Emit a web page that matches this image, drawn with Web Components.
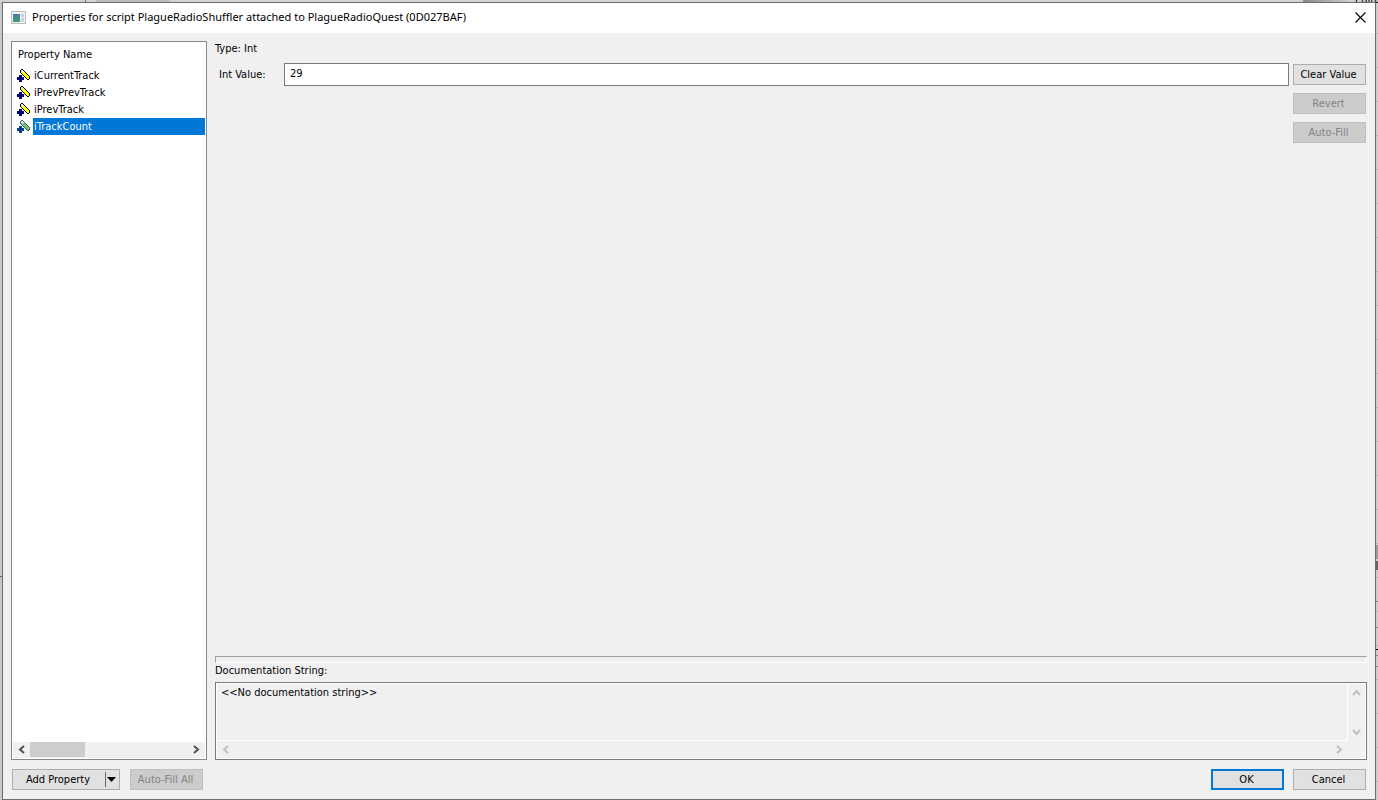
<!DOCTYPE html>
<html lang="en">
<head>
<meta charset="utf-8">
<title>Script Properties</title>
<style>
    html, body { height: 100%; }
    body {
        margin: 0;
        box-sizing: border-box;
        padding: 2px 2px 0;
        font: 11px/16px "DejaVu Sans Condensed", "DejaVu Sans", sans-serif;
        color: #000;
        background: #c8c8c8;
        overflow: hidden;
    }
</style>
</head>
<body>
<desktop-backdrop></desktop-backdrop>
<dialog-window caption="Properties for script PlagueRadioShuffler attached to PlagueRadioQuest (0D027BAF)">
    <property-list slot="list">
        <property-item>iCurrentTrack</property-item>
        <property-item>iPrevPrevTrack</property-item>
        <property-item>iPrevTrack</property-item>
        <property-item selected>iTrackCount</property-item>
    </property-list>
    <value-editor type="Int" value="29"></value-editor>
    <documentation-box>&lt;&lt;No documentation string&gt;&gt;</documentation-box>
    <split-button slot="footer">Add Property</split-button>
    <win-button slot="footer" disabled>Auto-Fill All</win-button>
    <win-button slot="actions" default>OK</win-button>
    <win-button slot="actions">Cancel</win-button>
</dialog-window>

<script>
const arrowPaths = {
    left: 'M7 1L3 4.500L7 8',
    right: 'M2 1L6 4.500L2 8',
    up: 'M1 7L4.500 3L8 7',
    down: 'M1 2L4.500 6L8 2'
};

function arrow(dir) {
    return `<svg width="9" height="9" viewBox="0 0 9 9"><path d="${arrowPaths[dir]}" fill="none" stroke="currentColor" stroke-width="2"/></svg>`;
}

// What can be seen of the windows behind the dialog
class DesktopBackdrop extends HTMLElement {
    connectedCallback() {
        this.attachShadow({ mode: 'open' }).innerHTML = `
            <style>
                :host { position: fixed; inset: 0; z-index: -1; overflow: hidden; background: #c8c8c8; }
                .top { position: absolute; top: 0; left: 0; right: 0; height: 2px; background: #d2d2d2; }
                .side { position: absolute; top: 0; right: 0; bottom: 0; width: 2px; background:
                    linear-gradient(#999, #999) 0 545px / 2px 14px no-repeat,
                    linear-gradient(#666, #666) 0 561px / 2px 9px no-repeat,
                    linear-gradient(#000, #000) 0 649px / 2px 1px no-repeat,
                    linear-gradient(#888, #888) 0 601px / 2px 1px no-repeat,
                    linear-gradient(#888, #888) 0 627px / 2px 1px no-repeat,
                    linear-gradient(#888, #888) 0 655px / 2px 1px no-repeat,
                    linear-gradient(#888, #888) 0 666px / 2px 1px no-repeat,
                    repeating-linear-gradient(#ccc 0 33px, #b4b4b4 33px 34px); }
                .rule { position: absolute; left: 0; top: 576px; width: 2px; height: 1px; background: #666; }
                .tab {
                    position: absolute;
                    bottom: calc(100% - 2px);
                    left: 96px;
                    width: 73px;
                    background: #bdbdbd;
                    text-align: center;
                    line-height: 12px;
                }
                .cell { position: absolute; bottom: calc(100% - 8px); left: calc(100% - 23px); }
                .edge { position: absolute; top: 0; left: 85px; width: 1px; height: 2px; background: #777; }
                .shade { position: absolute; top: 0; right: 30px; width: 45px; height: 2px; background: linear-gradient(90deg, #888, #ccc); }
            </style>
            <div class="top"></div><div class="edge"></div><div class="tab">Remove</div>
            <div class="shade"></div><div class="side"></div><div class="rule"></div>
            <div class="cell">Editor</div>
        `;
    }
}

class DialogWindow extends HTMLElement {
    connectedCallback() {
        this.attachShadow({ mode: 'open' }).innerHTML = `
            <style>
                :host {
                    display: flex;
                    flex-direction: column;
                    box-sizing: border-box;
                    height: 100%;
                    border: 1px solid #6d6d6d;
                    background: #f0f0f0;
                }
                header {
                    display: flex;
                    align-items: center;
                    gap: 6px;
                    box-sizing: border-box;
                    height: 30px;
                    padding: 0 8px 2px;
                    background: #fff;
                }
                h1 { flex: 1; margin: 0; font: 11px/16px "Noto Sans", sans-serif; white-space: nowrap; }
                .close { display: flex; border: 0; padding: 1px; background: none; }
                .main {
                    flex: 1;
                    min-height: 0;
                    display: grid;
                    grid-template-columns: 196px 1fr;
                    gap: 8px;
                    padding: 8px 8px 0;
                }
                .panel { display: flex; flex-direction: column; min-width: 0; }
                footer { display: flex; justify-content: space-between; padding: 9px; }
                footer div { display: flex; gap: 9px; }
                footer .left { gap: 10px; }
            </style>
            <header>
                <svg width="15" height="13" viewBox="0 0 15 13" shape-rendering="crispEdges">
                    <defs><linearGradient id="g" x2="0" y2="1"><stop stop-color="#4c7cb0"/><stop offset="1" stop-color="#3f9a70"/></linearGradient></defs>
                    <path d="M0 0h15v13H0z" fill="#b9bcc0"/>
                    <path d="M1 1h13v11H1z" fill="#f0f1f2"/>
                    <path d="M2 3h7v8H2z" fill="url(#g)"/>
                    <path d="M10 3h3v3h-3z" fill="#c3d2dc"/>
                    <path d="M10 7h3v4h-3z" fill="#cdd3da"/>
                </svg>
                <h1></h1>
                <button class="close" aria-label="Close">
                    <svg width="11" height="11" viewBox="0 0 11 11"><path d="M0.500 0.500l10 10M10.500 0.500l-10 10" stroke="#000" stroke-width="1.100"/></svg>
                </button>
            </header>
            <div class="main">
                <slot name="list"></slot>
                <div class="panel"><slot></slot></div>
            </div>
            <footer>
                <div class="left"><slot name="footer"></slot></div>
                <div><slot name="actions"></slot></div>
            </footer>
        `;
        this.shadowRoot.querySelector('h1').textContent = this.getAttribute('caption');
    }
}

class PropertyList extends HTMLElement {
    connectedCallback() {
        this.attachShadow({ mode: 'open' }).innerHTML = `
            <style>
                :host {
                    display: flex;
                    flex-direction: column;
                    min-height: 0;
                    border: 1px solid #828790;
                    padding: 1px;
                    background: #fff;
                }
                .head { padding: 4px 5px; }
                .items { flex: 1; }
                .bar { display: flex; align-items: center; height: 16px; background: #f0f0f0; }
                .bar button { display: flex; border: 0; padding: 3px 4px 4px; background: none; color: #505050; }
                .track { flex: 1; align-self: stretch; display: flex; }
                .thumb { width: 55px; height: 15px; background: #cdcdcd; }
            </style>
            <div class="head">Property Name</div>
            <div class="items" role="listbox" aria-label="Property Name"><slot></slot></div>
            <div class="bar">
                <button aria-label="Scroll left">${arrow('left')}</button>
                <div class="track"><div class="thumb"></div></div>
                <button aria-label="Scroll right">${arrow('right')}</button>
            </div>
        `;
        this.addEventListener('click', e => {
            const item = e.target.closest('property-item');
            if (!item) return;
            this.querySelectorAll('property-item').forEach(p => p.toggleAttribute('selected', p === item));
        });
    }
}

class PropertyItem extends HTMLElement {
    connectedCallback() {
        this.setAttribute('role', 'option');
        this.attachShadow({ mode: 'open' }).innerHTML = `
            <style>
                :host {
                    display: flex;
                    align-items: center;
                    gap: 3px;
                    height: 17px;
                    padding-left: 4px;
                    --plus: #000080;
                    --wand: #ffff00;
                    --edge: #000;
                }
                :host([selected]) { --plus: #003c94; --wand: #7fbc6b; --edge: #2a6a8c; }
                .name { flex: 1; padding: 1px 0 0 1px; }
                :host([selected]) .name { background: #0078d7; color: #fff; }
            </style>
            <svg width="13" height="13" viewBox="0 0 13 13" shape-rendering="crispEdges">
                <path d="M4 0h2v1h1v1h1v1h1v1h1v1h1v1h1v1h1v3h-1v1h-2v-1H9V9H8V8H7V7H6V6H5V5H4V4H3V1h1z" fill="var(--edge)"/>
                <path d="M4 1h2v1h1v1h1v1h1v1h1v1h1v1h1v3h-2V9H9V8H8V7H7V6H6V5H5V4H4z" fill="var(--wand)"/>
                <path d="M4 1h2v1h1v1H6v1H5V3H4z" fill="#e8e8d0"/>
                <path d="M2 6h3v2h2v3H5v2H2v-2H0V8h2z" fill="var(--plus)"/>
            </svg>
            <span class="name"><slot></slot></span>
        `;
    }
}

class WinButton extends HTMLElement {
    connectedCallback() {
        this.attachShadow({ mode: 'open' }).innerHTML = `
            <style>
                :host { display: block; width: 73px; }
                button {
                    display: block;
                    box-sizing: border-box;
                    width: 100%;
                    height: 21px;
                    border: 1px solid #adadad;
                    padding: 1px 2px 0 0;
                    font: inherit;
                    color: #000;
                    background: #e1e1e1;
                    white-space: nowrap;
                }
                button:disabled { border-color: #bfbfbf; background: #ccc; color: #838383; }
                :host([default]) button { border: 2px solid #0078d7; }
            </style>
            <button><slot></slot></button>
        `;
        this.shadowRoot.querySelector('button').disabled = this.hasAttribute('disabled');
    }
}

class SplitButton extends HTMLElement {
    connectedCallback() {
        this.attachShadow({ mode: 'open' }).innerHTML = `
            <style>
                :host {
                    display: flex;
                    align-items: center;
                    box-sizing: border-box;
                    width: 108px;
                    height: 21px;
                    border: 1px solid #adadad;
                    background: #e1e1e1;
                }
                button { border: 0; padding: 0; font: inherit; color: #000; background: none; white-space: nowrap; }
                .label { flex: 1; height: 19px; padding: 1px 2px 0 0; }
                .drop { display: flex; align-items: center; width: 14px; height: 15px; padding-left: 1px; border-left: 1px solid #696969; }
            </style>
            <button class="label"><slot></slot></button>
            <button class="drop" aria-label="More">
                <svg width="9" height="5" viewBox="0 0 9 5"><path d="M0 0h9L4.500 5z"/></svg>
            </button>
        `;
    }
}

class ValueEditor extends HTMLElement {
    connectedCallback() {
        const type = this.getAttribute('type');
        this.attachShadow({ mode: 'open' }).innerHTML = `
            <style>
                :host { display: block; flex: 1; }
                .row { display: flex; align-items: flex-start; padding: 6px 1px 0 4px; }
                label { width: 65px; padding-top: 4px; }
                input {
                    flex: 1;
                    min-width: 0;
                    box-sizing: border-box;
                    height: 23px;
                    margin: 0 4px 0 0;
                    border: 1px solid #7a7a7a;
                    padding: 0 5px 2px;
                    font: inherit;
                    background: #fff;
                }
                .buttons { display: flex; flex-direction: column; gap: 8px; padding-top: 1px; }
            </style>
            <div>Type: ${type}</div>
            <div class="row">
                <label for="value">${type} Value:</label>
                <input id="value" type="text" value="${this.getAttribute('value')}">
                <div class="buttons">
                    <win-button>Clear Value</win-button>
                    <win-button disabled>Revert</win-button>
                    <win-button disabled>Auto-Fill</win-button>
                </div>
            </div>
        `;
    }
}

class DocumentationBox extends HTMLElement {
    connectedCallback() {
        this.attachShadow({ mode: 'open' }).innerHTML = `
            <style>
                :host { display: block; }
                .groove { height: 5px; border: 1px solid; border-color: #a0a0a0 #fff #fff #a0a0a0; }
                label { display: block; margin-bottom: 3px; }
                .box {
                    display: grid;
                    grid-template: 1fr 17px / 1fr 17px;
                    box-sizing: border-box;
                    height: 78px;
                    border: 1px solid #7a7a7a;
                    background: #f0f0f0;
                    box-shadow: inset 0 0 0 1px #fff;
                    padding: 1px;
                }
                textarea {
                    border: solid #fff;
                    border-width: 0 1px 1px 0;
                    padding: 1px 4px;
                    resize: none;
                    overflow: hidden;
                    outline: 0;
                    font: inherit;
                    color: inherit;
                    background: none;
                    white-space: pre;
                }
                .bar { display: flex; justify-content: space-between; align-items: center; }
                .v { flex-direction: column; }
                .bar button { display: flex; border: 0; padding: 4px; background: none; color: #bfbfbf; }
            </style>
            <div class="groove"></div>
            <label for="doc">Documentation String:</label>
            <div class="box">
                <textarea id="doc" readonly></textarea>
                <div class="bar v">
                    <button disabled aria-label="Scroll up">${arrow('up')}</button>
                    <button disabled aria-label="Scroll down">${arrow('down')}</button>
                </div>
                <div class="bar">
                    <button disabled aria-label="Scroll left">${arrow('left')}</button>
                    <button disabled aria-label="Scroll right">${arrow('right')}</button>
                </div>
            </div>
        `;
        this.shadowRoot.getElementById('doc').value = this.textContent;
    }
}

customElements.define('desktop-backdrop', DesktopBackdrop);
customElements.define('dialog-window', DialogWindow);
customElements.define('property-list', PropertyList);
customElements.define('property-item', PropertyItem);
customElements.define('win-button', WinButton);
customElements.define('split-button', SplitButton);
customElements.define('value-editor', ValueEditor);
customElements.define('documentation-box', DocumentationBox);
</script>
</body>
</html>
